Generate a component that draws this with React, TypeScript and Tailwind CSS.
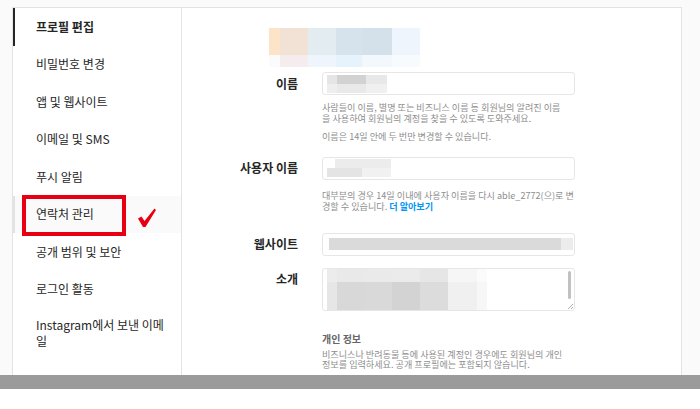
const font = { fontFamily: '"Noto Sans CJK KR", "Noto Sans", sans-serif' };

const menu = [
  '프로필 편집',
  '비밀번호 변경',
  '앱 및 웹사이트',
  '이메일 및 SMS',
  '푸시 알림',
  '연락처 관리',
  '공개 범위 및 보안',
  '로그인 활동',
];

function Sidebar() {
  return (
    <div className="relative w-[169px] shrink-0 border-r border-[#e3e3e3]">
      {menu.map((label, i) => (
        <div
          key={label}
          className={
            i === 0
              ? 'flex h-[37.5px] items-center border-l-2 border-[#262626] pl-[21px] text-[12px] font-bold text-[#262626]'
              : i === 5
              ? 'flex h-[37.5px] items-center border-l-2 border-[#e3e3e3] bg-[#fafafa] pl-[21px] text-[12px] text-[#262626]'
              : 'flex h-[37.5px] items-center border-l-2 border-transparent pl-[21px] text-[12px] text-[#262626]'
          }
        >
          {label}
        </div>
      ))}
      <div className="whitespace-nowrap border-l-2 border-transparent pl-[21px] pt-[9px] text-[12px] leading-[16px] text-[#262626]">
        Instagram에서 보낸 이메
        <br />
        일
      </div>

      {/* annotation */}
      <div className="absolute left-[9px] top-[187px] h-[41px] w-[104px] border-[4px] border-[#e60012]" />
      <svg className="absolute left-[124px] top-[200px]" width="20" height="20" viewBox="0 0 20 20">
        <path d="M1 10.5 L4.5 8.5 L7.5 13 L17.5 0.5 L19 2 L8.5 19 L6 19 Z" fill="#e60012" />
      </svg>
    </div>
  );
}

function Row({ label, children, top }: { label: string; children: React.ReactNode; top?: boolean }) {
  return (
    <div className={top ? 'flex items-start' : 'flex items-center'}>
      <div
        className={
          top
            ? 'w-[116px] pt-[3px] text-right text-[12px] font-bold leading-[16px] text-[#262626]'
            : 'w-[116px] text-right text-[12px] font-bold text-[#262626]'
        }
      >
        {label}
      </div>
      <div className="ml-[24px] w-[253px]">{children}</div>
    </div>
  );
}

function Help({ lines, className }: { lines: React.ReactNode[]; className?: string }) {
  return (
    <div className={'ml-[140px] text-[9.1px] leading-[11px] text-[#8e8e8e] ' + (className || '')}>
      {lines.map((l, i) => (
        <div key={i} className="whitespace-nowrap">
          {l}
        </div>
      ))}
    </div>
  );
}

export default function App() {
  return (
    <div className="h-[409px] w-[700px] overflow-hidden bg-white" style={font}>
      <div className="h-[375px] overflow-hidden bg-[#fafafa] pl-[12px] pr-[18px] pt-[7px]">
        <div className="flex h-[400px] border border-b-0 border-[#e3e3e3] bg-white">
          <Sidebar />

          {/* main form */}
          <div className="flex-1">
            {/* blurred avatar + name */}
            <div className="ml-[87px] mt-[20px] flex h-[39px] flex-col">
              <div className="flex h-[27px]">
                <div className="w-[11px] bg-[#fde3c8]" />
                <div className="w-[28px] bg-[#f2e2d6]" />
                <div className="w-[28px] bg-[#e3ecf0]" />
                <div className="w-[26px] bg-[#d6e3ec]" />
                <div className="w-[30px] bg-[#d5e1ea]" />
                <div className="w-[28px] bg-[#eef5fc]" />
              </div>
              <div className="flex h-[12px]">
                <div className="w-[11px] bg-[#fcfbfb]" />
                <div className="w-[28px] bg-[#f5eded]" />
                <div className="w-[28px] bg-[#eef5fc]" />
                <div className="w-[26px] bg-[#e7f3fc]" />
                <div className="w-[30px] bg-[#f3f8fc]" />
                <div className="w-[28px] bg-[#f8fbfe]" />
              </div>
            </div>

            <div className="mt-[5px]">
              <Row label="이름">
                <div className="flex h-[23px] flex-col justify-center rounded-[3px] border border-[#e6e6e6] pl-[4px]">
                  <div className="flex h-[9px]">
                    <div className="w-[10px] bg-[#e5e5e5]" />
                    <div className="w-[29px] bg-[#d2d2d2]" />
                    <div className="w-[21px] bg-[#e8e8e8]" />
                  </div>
                  <div className="flex h-[9px]">
                    <div className="w-[10px] bg-[#eeeeee]" />
                    <div className="w-[29px] bg-[#e9e9e9]" />
                    <div className="w-[21px] bg-[#f0f0f0]" />
                  </div>
                </div>
              </Row>
            </div>
            <Help
              className="mt-[7px]"
              lines={[
                '사람들이 이름, 별명 또는 비즈니스 이름 등 회원님의 알려진 이름',
                '을 사용하여 회원님의 계정을 찾을 수 있도록 도와주세요.',
              ]}
            />
            <Help className="mt-[7px]" lines={['이름은 14일 안에 두 번만 변경할 수 있습니다.']} />

            <div className="mt-[14.5px]">
              <Row label="사용자 이름">
                <div className="flex h-[23px] flex-col justify-center rounded-[3px] border border-[#e6e6e6] pl-[4px]">
                  <div className="flex h-[9px]">
                    <div className="w-[8px] bg-white" />
                    <div className="w-[56px] bg-[#ececec]" />
                  </div>
                  <div className="flex h-[9px]">
                    <div className="w-[35px] bg-[#e4e4e4]" />
                    <div className="w-[29px] bg-[#f1f1f1]" />
                  </div>
                </div>
              </Row>
            </div>
            <Help
              className="mt-[10.5px]"
              lines={[
                '대부분의 경우 14일 이내에 사용자 이름을 다시 able_2772(으)로 변',
                <>
                  경할 수 있습니다. <span className="font-semibold text-[#0095f6]">더 알아보기</span>
                </>,
              ]}
            />

            <div className="mt-[20.5px]">
              <Row label="웹사이트">
                <div className="flex h-[23px] items-center rounded-[3px] border border-[#e6e6e6] pl-[6px]">
                  <div className="h-[12px] w-[232px] bg-[#dadada]" />
                  <div className="h-[12px] w-[12px] bg-[#ececec]" />
                </div>
              </Row>
            </div>

            <div className="mt-[12px]">
              <Row label="소개" top>
                <div className="relative h-[43px] rounded-[3px] border border-[#e6e6e6]">
                  <div className="ml-[4px] flex h-[41px] flex-col">
                    <div className="flex h-[13px]">
                      <div className="w-[10px] bg-[#ececec]" />
                      <div className="w-[28px] bg-[#e9e9e9]" />
                      <div className="w-[27px] bg-[#eaeaea]" />
                      <div className="w-[28px] bg-[#ebebeb]" />
                      <div className="w-[28px] bg-[#e6e6e6]" />
                      <div className="w-[29px] bg-[#f6f6f6]" />
                      <div className="w-[10px] bg-[#fbfbfb]" />
                    </div>
                    <div className="flex h-[28px]">
                      <div className="w-[10px] bg-[#e6e6e6]" />
                      <div className="w-[28px] bg-[#d8d8d8]" />
                      <div className="w-[27px] bg-[#d9d9d9]" />
                      <div className="w-[28px] bg-[#d3d3d3]" />
                      <div className="w-[28px] bg-[#dcdcdc]" />
                      <div className="w-[29px] bg-[#f0f0f0]" />
                      <div className="w-[10px] bg-[#f7f7f7]" />
                    </div>
                  </div>
                  <div className="absolute right-[3px] top-[2px] h-[28px] w-[3px] rounded-full bg-[#c1c1c1]" />
                  <svg className="absolute bottom-[1px] right-[1px]" width="6" height="6" viewBox="0 0 6 6">
                    <path d="M6 1 L1 6 M6 4 L4 6" stroke="#9a9a9a" strokeWidth="0.8" />
                  </svg>
                </div>
              </Row>
            </div>

            <div className="ml-[140px] mt-[21px] text-[10px] font-semibold leading-[14px] text-[#666666]">
              개인 정보
            </div>
            <Help
              className="mt-[3px] !leading-[10px]"
              lines={[
                '비즈니스나 반려동물 등에 사용된 계정인 경우에도 회원님의 개인',
                '정보를 입력하세요. 공개 프로필에는 포함되지 않습니다.',
              ]}
            />
          </div>
        </div>
      </div>
      <div className="h-[14px] bg-[#9b9b9b]" />
      <div className="h-[20px] bg-white" />
    </div>
  );
}
